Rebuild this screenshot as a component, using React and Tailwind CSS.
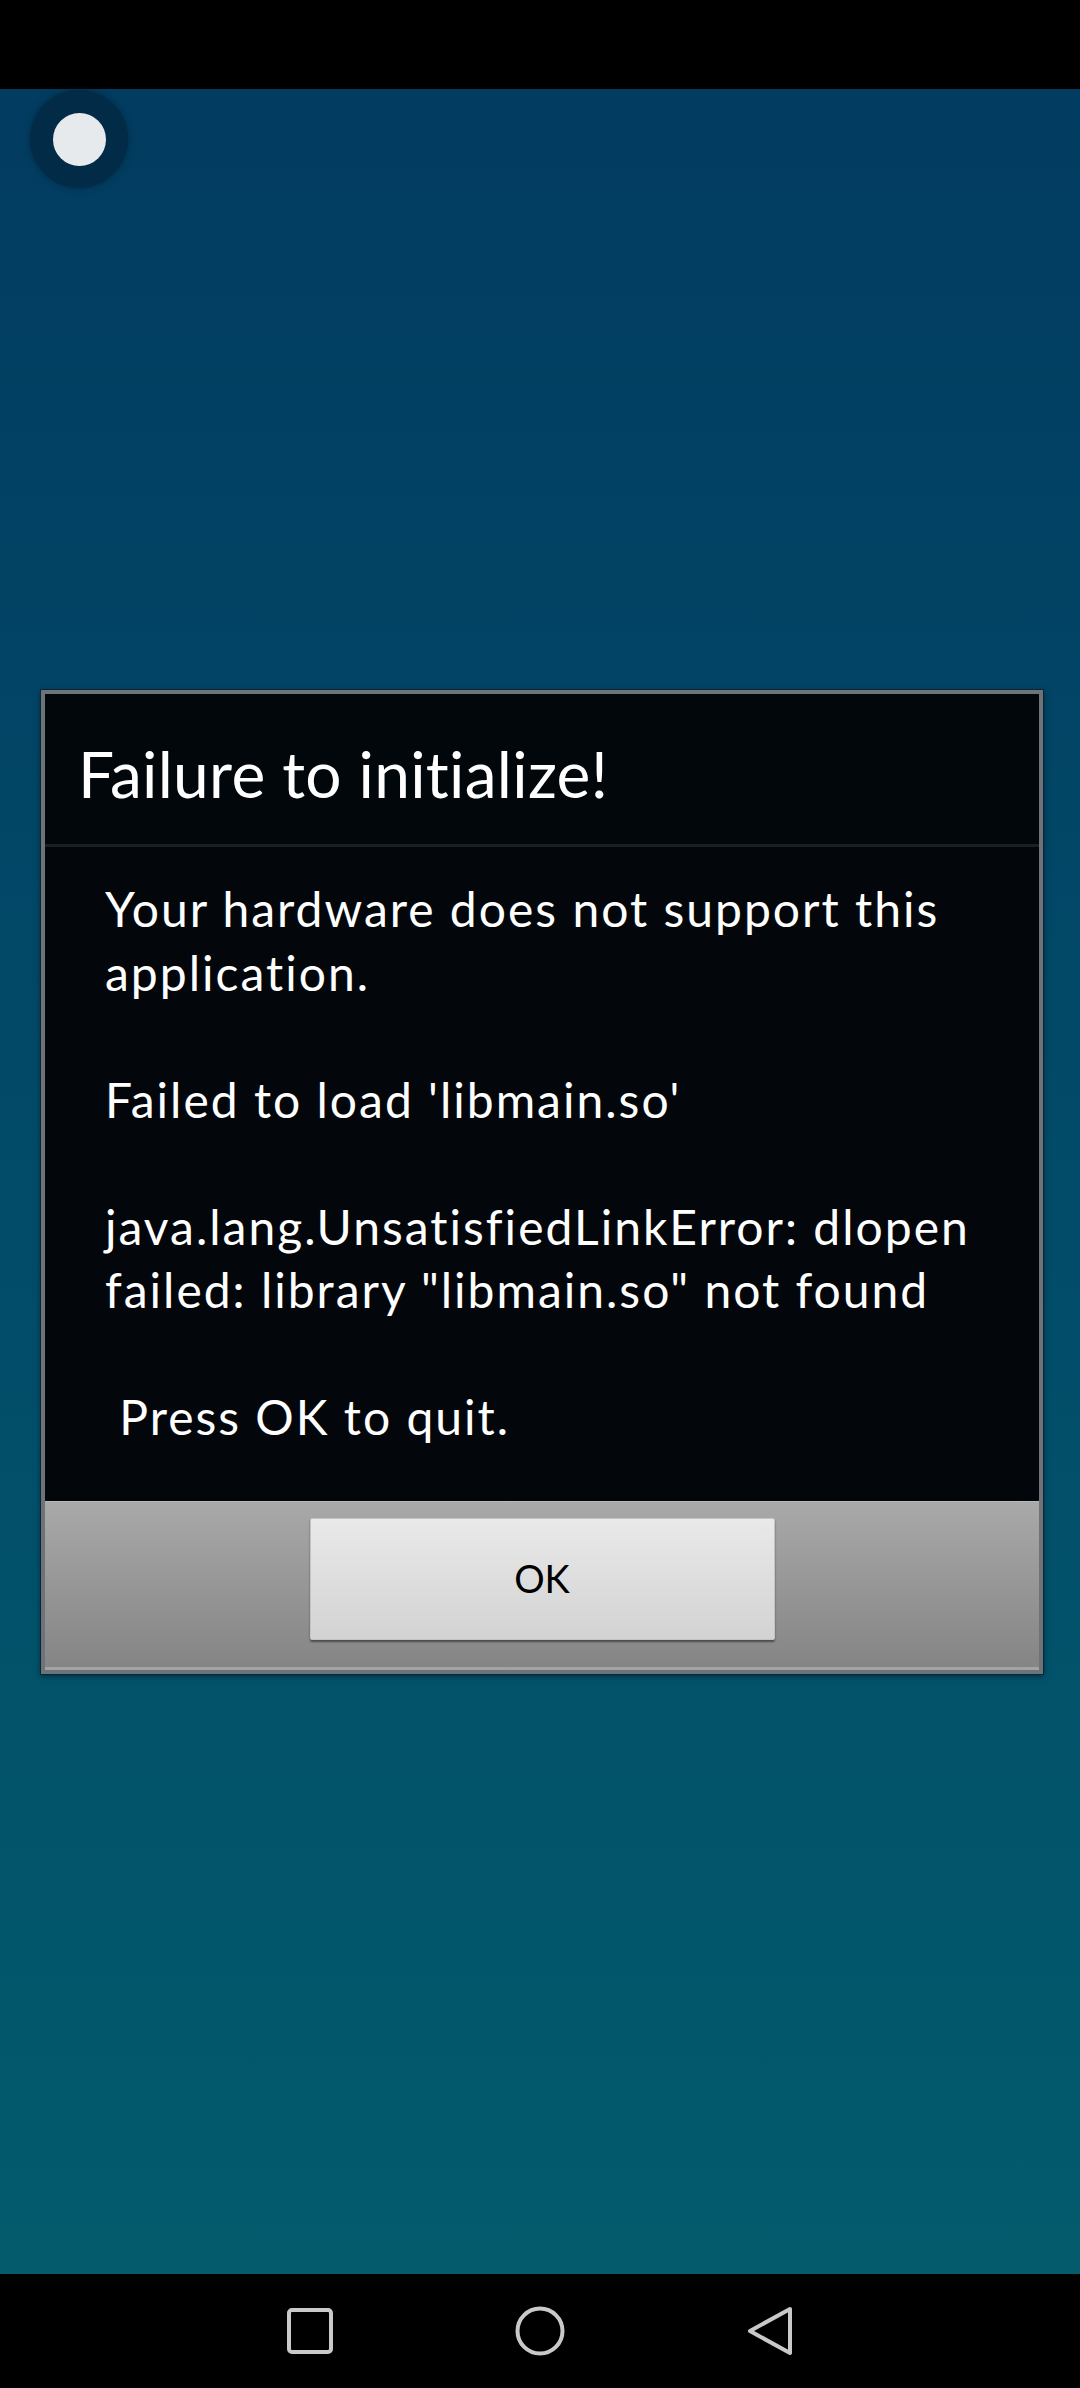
import React from 'react';

const NavSquare = () => (
  <svg width="48" height="48" viewBox="0 0 48 48" fill="none">
    <rect x="3" y="3" width="42" height="42" rx="3" stroke="#c9c9c9" strokeWidth="4" />
  </svg>
);

const NavHome = () => (
  <svg width="52" height="52" viewBox="0 0 52 52" fill="none">
    <circle cx="26" cy="26" r="22.5" stroke="#c9c9c9" strokeWidth="4" />
  </svg>
);

const NavBack = () => (
  <svg width="48" height="52" viewBox="0 0 48 52" fill="none">
    <path d="M44 4 L4 26 L44 48 Z" stroke="#c9c9c9" strokeWidth="4" strokeLinejoin="round" />
  </svg>
);

const bodyText =
  'Your hardware does not support this\napplication.\n\nFailed to load \'libmain.so\'\n\njava.lang.UnsatisfiedLinkError: dlopen\nfailed: library "libmain.so" not found\n\n Press OK to quit.';

export default function App() {
  return (
    <div className="relative flex flex-col h-[2388px] w-[1080px] overflow-hidden font-['Lato','Open_Sans',sans-serif]">
      {/* status bar */}
      <div className="h-[89px] bg-black shrink-0"></div>

      {/* app area */}
      <div className="relative flex-1 bg-gradient-to-b from-[#023c60] via-[#024b69] to-[#035b6c] px-[41px] pt-[601px]">
        {/* floating dot */}
        <div className="absolute left-[30px] top-[1px] w-[98px] h-[98px] rounded-full bg-[#022b47] flex items-center justify-center shadow-[0_0_6px_rgba(1,30,50,0.6)]">
          <div className="w-[53px] h-[53px] rounded-full bg-[#e7eaed]"></div>
        </div>

        {/* dialog */}
        <div className="w-[1002px] border-[4px] border-[#6d7379] shadow-[0_0_0_1px_#0b2436,0_2px_6px_rgba(0,0,0,0.5)] bg-[#03070b]">
          <div className="h-[153px] flex items-center px-[33px] pt-[10px] border-b-[3px] border-[#172027] bg-[#02070c]">
            <h1 className="text-white text-[64px] leading-none tracking-[0.3px]">Failure to initialize!</h1>
          </div>
          <div className="pl-[60px] pr-[10px] pt-[30px] pb-[52px]">
            <p className="whitespace-pre-wrap text-white text-[48px] leading-[63.5px] tracking-[2px]">{bodyText}</p>
          </div>
          <div className="h-[169px] bg-gradient-to-b from-[#a9a9a9] to-[#858585] border-t border-[#b8b8b8] border-b-[3px] border-b-[#a3a3a3] flex justify-center pt-[16px]">
            <button className="w-[465px] h-[122px] bg-gradient-to-b from-[#e9e9e9] to-[#d3d3d3] border border-[#c4c4c4] rounded-[2px] shadow-[0_2px_2px_rgba(0,0,0,0.45)] flex items-center justify-center text-black text-[38px]">
              OK
            </button>
          </div>
        </div>
      </div>

      {/* navigation bar */}
      <div className="h-[114px] bg-black shrink-0 flex justify-center items-center">
        <div className="w-[230px] flex justify-center"><NavSquare /></div>
        <div className="w-[230px] flex justify-center"><NavHome /></div>
        <div className="w-[230px] flex justify-center"><NavBack /></div>
      </div>
    </div>
  );
}
